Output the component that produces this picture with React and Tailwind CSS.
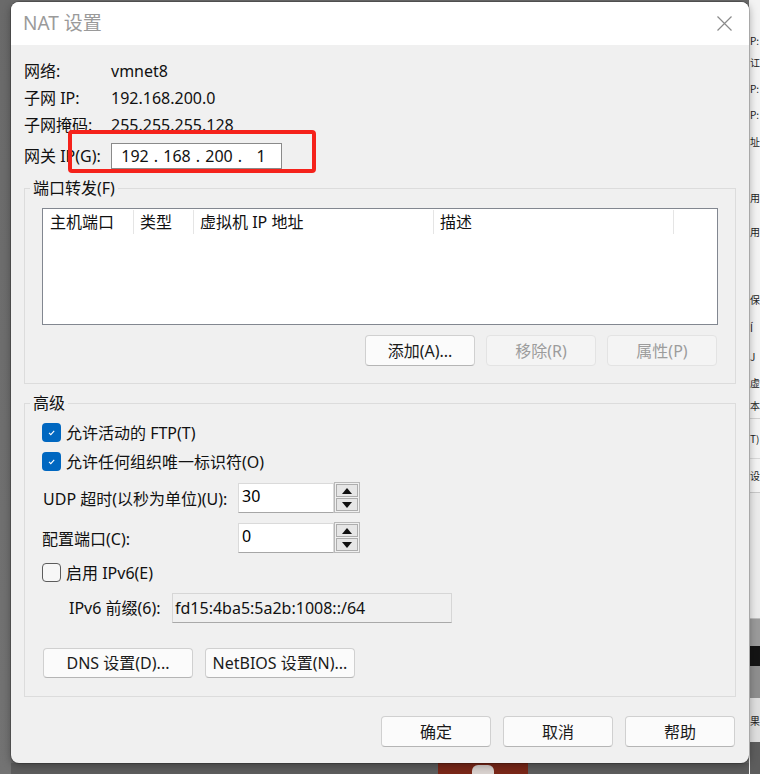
import React from "react";

function Btn({ children, disabled, className = "" }) {
  return (
    <div
      className={`flex items-center justify-center rounded-[4px] border text-[16px] ${
        disabled
          ? "border-[#e3e3e3] bg-[#f4f4f4] text-[#9c9c9c]"
          : "border-[#d0d0d0] border-b-[#b5b5b5] bg-[#fbfbfb] text-[#1a1a1a]"
      } ${className}`}
    >
      {children}
    </div>
  );
}

function Check({ checked }) {
  if (checked) {
    return (
      <div className="flex h-[19px] w-[19px] shrink-0 items-center justify-center rounded-[4px] bg-[#0067c0]">
        <svg width="11" height="11" viewBox="0 0 11 11">
          <path d="M3 5.9 L4.8 7.6 L8.2 3.8" fill="none" stroke="white" strokeWidth="1.1" />
        </svg>
      </div>
    );
  }
  return <div className="h-[19px] w-[19px] shrink-0 rounded-[4px] border border-[#5c5c5c] bg-[#f7f7f7]" />;
}

function Spin({ value }) {
  return (
    <div className="flex items-center">
      <div className="h-[30px] w-[96px] border border-[#dadada] border-b-[#a6a6a6] bg-white pl-[3px] text-[16px] leading-[24px] text-black">
        {value}
      </div>
      <div className="flex h-[31px] w-[26px] flex-col gap-[1px] border border-[#b9b9b9] bg-[#f0f0f0] p-[1px]">
        <div className="flex flex-1 items-center justify-center border border-[#adadad] bg-[#e6e6e6]">
          <svg width="10" height="6" viewBox="0 0 10 6">
            <path d="M0 6 L5 0 L10 6 Z" fill="#111" />
          </svg>
        </div>
        <div className="flex flex-1 items-center justify-center border border-[#adadad] bg-[#e6e6e6]">
          <svg width="10" height="6" viewBox="0 0 10 6">
            <path d="M0 0 L10 0 L5 6 Z" fill="#111" />
          </svg>
        </div>
      </div>
    </div>
  );
}

function StripLine({ h, children, className = "" }) {
  return (
    <div className={`flex items-center whitespace-nowrap text-[10px] text-[#222] ${h} ${className}`}>
      {children}
    </div>
  );
}

export default function App() {
  return (
    <div className="flex h-[774px] w-[760px] overflow-hidden bg-[#6c6c6c] font-['Noto_Sans','Noto_Sans_CJK_SC',sans-serif]">
      {/* left backdrop */}
      <div className="w-[11px] shrink-0 bg-gradient-to-b from-[#6a6a6a] to-[#737373]" />

      {/* dialog column */}
      <div className="flex w-[738px] shrink-0 flex-col">
        <div className="h-[2px] shrink-0" />
        <div className="relative flex h-[761px] shrink-0 flex-col rounded-[8px] bg-[#f0f0f0] shadow-[0_0_0_1px_rgba(0,0,0,0.18),0_2px_8px_rgba(0,0,0,0.35)]">
          {/* title bar */}
          <div className="flex h-[43px] shrink-0 items-center justify-between rounded-t-[8px] bg-white pl-[12px] pr-[17px]">
            <span className="text-[19px] text-[#9a9a9a]">NAT 设置</span>
            <svg width="15" height="15" viewBox="0 0 15 15">
              <path d="M0.5 0.5 L14.5 14.5 M14.5 0.5 L0.5 14.5" stroke="#8a8a8a" strokeWidth="1.2" />
            </svg>
          </div>

          {/* body */}
          <div className="flex flex-1 flex-col pt-[12px] text-[16px] leading-[20px] text-[#111]">
            <div className="flex flex-col pl-[13px]">
              <div className="flex h-[27px] items-center">
                <span className="w-[87px]">网络:</span>
                <span>vmnet8</span>
              </div>
              <div className="flex h-[27px] items-center">
                <span className="w-[87px]">子网 IP:</span>
                <span>192.168.200.0</span>
              </div>
              <div className="flex h-[27px] items-center">
                <span className="w-[87px]">子网掩码:</span>
                <span>255.255.255.128</span>
              </div>
              <div className="mt-[5px] flex h-[26px] items-center">
                <span className="w-[87px]">网关 IP(G):</span>
                <div className="flex h-[26px] w-[171px] items-center border border-[#8a8a8a] bg-white pl-[5px]">
                  <span className="w-[36px] text-center">192</span>
                  <span className="w-[6px] text-center">.</span>
                  <span className="w-[36px] text-center">168</span>
                  <span className="w-[6px] text-center">.</span>
                  <span className="w-[36px] text-center">200</span>
                  <span className="w-[6px] text-center">.</span>
                  <span className="w-[36px] text-center">1</span>
                </div>
              </div>
            </div>

            {/* port forwarding group */}
            <fieldset className="mx-[13px] mt-[9px] border border-[#dcdcdc] pb-[17px] pt-[10px]">
              <legend className="ml-[5px] px-[3px] leading-[20px]">端口转发(F)</legend>
              <div className="px-[17px]">
                <div className="h-[117px] border border-[#828790] bg-white">
                  <div className="flex h-[26px] items-center">
                    <div className="flex h-[24px] w-[91px] items-center border-r border-[#e5e5e5] pl-[7px]">主机端口</div>
                    <div className="flex h-[24px] w-[60px] items-center border-r border-[#e5e5e5] pl-[6px]">类型</div>
                    <div className="flex h-[24px] w-[240px] items-center border-r border-[#e5e5e5] pl-[6px]">虚拟机 IP 地址</div>
                    <div className="flex h-[24px] w-[240px] items-center border-r border-[#e5e5e5] pl-[6px]">描述</div>
                  </div>
                </div>
                <div className="mt-[10px] flex justify-end gap-[11px] pr-[1px]">
                  <Btn className="h-[31px] w-[110px]">添加(A)...</Btn>
                  <Btn disabled className="h-[31px] w-[110px]">移除(R)</Btn>
                  <Btn disabled className="h-[31px] w-[110px]">属性(P)</Btn>
                </div>
              </div>
            </fieldset>

            {/* advanced group */}
            <fieldset className="mx-[13px] mt-[9px] border border-[#dcdcdc] pb-[18px] pt-[10px]">
              <legend className="ml-[5px] px-[3px] leading-[20px]">高级</legend>
              <div className="flex flex-col px-[17px]">
                <div className="flex h-[19px] items-center gap-[5px]">
                  <Check checked />
                  <span>允许活动的 FTP(T)</span>
                </div>
                <div className="mt-[10px] flex h-[19px] items-center gap-[5px]">
                  <Check checked />
                  <span>允许任何组织唯一标识符(O)</span>
                </div>
                <div className="mt-[11px] flex h-[31px] items-center">
                  <span className="w-[196px] pl-[1px] pt-[3px]">UDP 超时(以秒为单位)(U):</span>
                  <Spin value="30" />
                </div>
                <div className="mt-[9px] flex h-[31px] items-center">
                  <span className="w-[196px] pt-[3px]">配置端口(C):</span>
                  <Spin value="0" />
                </div>
                <div className="mt-[10px] flex h-[19px] items-center gap-[5px]">
                  <Check />
                  <span>启用 IPv6(E)</span>
                </div>
                <div className="mt-[11px] flex h-[30px] items-center pl-[27px]">
                  <span className="w-[103px]">IPv6 前缀(6):</span>
                  <div className="flex h-[30px] w-[280px] items-center border border-[#d6d6d6] border-b-[#a9a9a9] bg-[#f0f0f0] pl-[2px]">
                    fd15:4ba5:5a2b:1008::/64
                  </div>
                </div>
                <div className="mt-[25px] flex gap-[12px] pl-[1px]">
                  <Btn className="h-[30px] w-[150px]">DNS 设置(D)...</Btn>
                  <Btn className="h-[30px] w-[150px]">NetBIOS 设置(N)...</Btn>
                </div>
              </div>
            </fieldset>

            {/* footer buttons */}
            <div className="mt-[19px] flex justify-end gap-[12px] pr-[14px]">
              <Btn className="h-[31px] w-[110px]">确定</Btn>
              <Btn className="h-[31px] w-[110px]">取消</Btn>
              <Btn className="h-[31px] w-[110px]">帮助</Btn>
            </div>
          </div>

          {/* red annotation box */}
          <div className="pointer-events-none absolute left-[57px] top-[128px] h-[43px] w-[248px] rounded-[4px] border-[4px] border-[#f5221b]" />
        </div>

        {/* bottom backdrop */}
        <div className="flex flex-1 bg-[#5d5d5d]">
          <div className="ml-[427px] flex h-full w-[90px] justify-center overflow-hidden bg-[#7a2718]">
            <div className="mt-[2px] h-[12px] w-[22px] rounded-t-[6px] bg-[#d9d2cf]" />
          </div>
        </div>
      </div>

      {/* right backdrop window */}
      <div className="flex flex-1 flex-col overflow-hidden bg-[#f3f3f3] pl-[1px] font-['Noto_Sans_CJK_SC',sans-serif]">
        <div className="h-[31px] shrink-0" />
        <StripLine h="h-[18px]">P:</StripLine>
        <StripLine h="h-[26px]">讧</StripLine>
        <StripLine h="h-[26px]">P:</StripLine>
        <StripLine h="h-[27px]">P:</StripLine>
        <StripLine h="h-[27px]">址</StripLine>
        <div className="h-[28px] shrink-0" />
        <StripLine h="h-[28px]">用</StripLine>
        <div className="h-[6px] shrink-0" />
        <StripLine h="h-[28px]">用</StripLine>
        <div className="h-[40px] shrink-0" />
        <StripLine h="h-[28px]">保</StripLine>
        <StripLine h="h-[28px]">Í</StripLine>
        <StripLine h="h-[30px]">J</StripLine>
        <StripLine h="h-[22px]">虚</StripLine>
        <StripLine h="h-[26px]" className="border-b border-[#d0d0d0]">本</StripLine>
        <StripLine h="h-[40px]" className="border-b border-[#d8d8d8]">T)</StripLine>
        <StripLine h="h-[34px]" className="border-b border-[#c8c8c8]">设</StripLine>
        <div className="h-[126px] shrink-0 border-b border-[#bdbdbd] bg-[#ebebeb]" />
        <div className="h-[27px] shrink-0 bg-[#9a9a9a]" />
        <div className="h-[20px] shrink-0 bg-[#141414]" />
        <div className="h-[32px] shrink-0 bg-[#8e8e8e]" />
        <StripLine h="h-[44px]" className="bg-[#dedede]">果</StripLine>
        <div className="flex-1 bg-[#5d5d5d]" />
      </div>
    </div>
  );
}
